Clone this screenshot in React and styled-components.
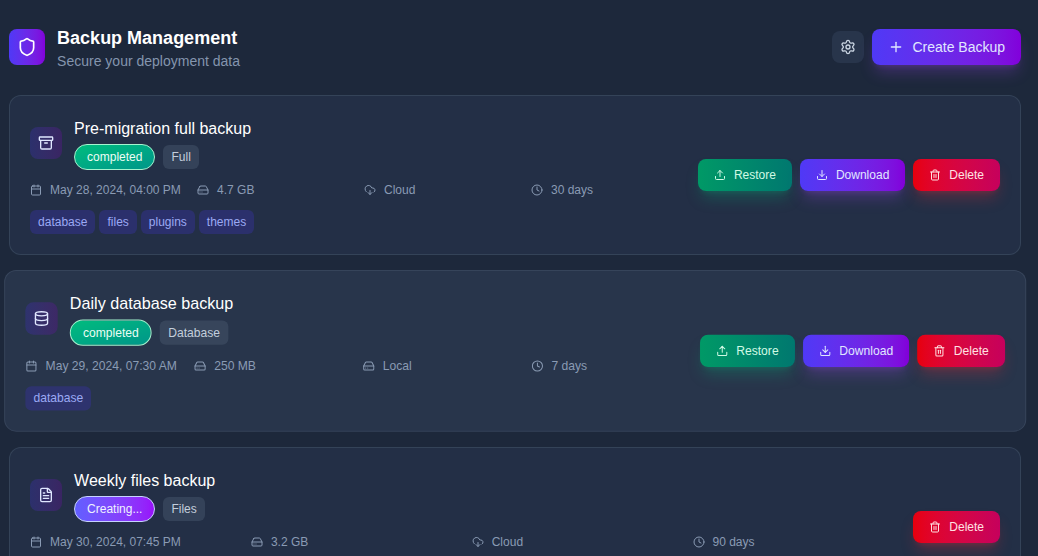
import React from 'react';
import styled, { createGlobalStyle, css } from 'styled-components';
import {
  Archive,
  Calendar,
  Clock,
  CloudDownload,
  Database,
  Download,
  FileText,
  HardDrive,
  Plus,
  Settings,
  Shield,
  Trash2,
  Upload,
} from 'lucide-react';

const GlobalStyle = createGlobalStyle`
  *, *::before, *::after { box-sizing: border-box; }
  body {
    margin: 0;
    background: #1d283b;
    font-family: "Liberation Sans", Arial, sans-serif;
    overflow: hidden;
  }
  h2, h3, p { margin: 0; }
  svg { display: block; flex-shrink: 0; }
`;

const Page = styled.main`
  height: 556px;
  overflow: hidden;
  padding: 23px 17px 0 9.1px;
`;

const Header = styled.header`
  display: flex;
  align-items: center;
  justify-content: space-between;
  margin-bottom: 24px;
`;

const Brand = styled.div`
  display: flex;
  align-items: center;
  gap: 12px;
`;

const BrandIcon = styled.div`
  padding: 8px;
  border-radius: 8px;
  color: #fff;
  background: linear-gradient(to right in oklab, #4f39f6, #8200db);
`;

const Title = styled.h2`
  padding-top: 2px;
  font-size: 18px;
  line-height: 26px;
  font-weight: 700;
  color: #fff;
`;

const Subtitle = styled.p`
  font-size: 14px;
  line-height: 20px;
  color: #8495ae;
`;

const HeaderActions = styled.div`
  display: flex;
  align-items: center;
  gap: 8px;
`;

const IconButton = styled.button`
  padding: 8px;
  border: 0;
  border-radius: 8px;
  color: #cad5e2;
  background: rgba(51, 65, 92, 0.5);
`;

const tones = {
  restore: css`
    color: #d0fae5;
    background: linear-gradient(to right in oklab, #009966, #00786f);
    box-shadow: 0 10px 15px -3px rgba(0, 188, 125, 0.25), 0 4px 6px -4px rgba(0, 188, 125, 0.25);
  `,
  primary: css`
    color: #e0e7ff;
    background: linear-gradient(to right in oklab, #4f39f6, #8200db);
    box-shadow: 0 10px 15px -3px rgba(173, 70, 255, 0.25), 0 4px 6px -4px rgba(173, 70, 255, 0.25);
  `,
  danger: css`
    color: #ffe2e2;
    background: linear-gradient(to right in oklab, #e7000b, #c6005c);
    box-shadow: 0 10px 15px -3px rgba(251, 44, 54, 0.25), 0 4px 6px -4px rgba(251, 44, 54, 0.25);
  `,
};

const Button = styled.button`
  display: flex;
  align-items: center;
  gap: 8px;
  padding: 8px 16px;
  border: 0;
  border-radius: 8px;
  font-family: inherit;
  font-size: ${({ $large }) => ($large ? '14px' : '12px')};
  line-height: ${({ $large }) => ($large ? '20px' : '16px')};
  white-space: nowrap;
  ${({ $tone }) => tones[$tone]}
`;

const List = styled.div`
  display: flex;
  flex-direction: column;
  gap: 16px;
`;

const Card = styled.article`
  display: flex;
  align-items: center;
  gap: 16px;
  padding: 20px;
  border: 1px solid rgba(69, 85, 108, 0.5);
  border-radius: 12px;
  background: ${({ $active }) => ($active ? 'rgba(51, 65, 92, 0.5)' : 'rgba(49, 65, 95, 0.3)')};
  ${({ $active }) => $active && 'transform: translate(0.2px, -0.15px) scale(1.01);'}
`;

const CardBody = styled.div`
  flex: 1;
  min-width: 0;
`;

const CardHead = styled.div`
  display: flex;
  align-items: center;
  gap: 12px;
  margin-bottom: 12px;
`;

const TypeIcon = styled.div`
  padding: 8px;
  border-radius: 8px;
  color: #e0e7ff;
  background: linear-gradient(to right in oklab, rgba(52, 49, 145, 0.5), rgba(89, 22, 139, 0.42));
`;

const CardTitle = styled.h3`
  margin-bottom: 4px;
  padding-top: 1px;
  font-size: 16px;
  line-height: 23px;
  font-weight: 400;
  color: #fff;
`;

const Badges = styled.div`
  display: flex;
  align-items: center;
  gap: 8px;
`;

const Status = styled.span`
  padding: 4px 12px;
  border-radius: 999px;
  font-size: 12px;
  line-height: 16px;
  ${({ $state }) =>
    $state === 'completed'
      ? css`
          color: #ecfdf5;
          border: 1px solid #a4f4cf;
          background: linear-gradient(to bottom right in oklab, #00bc7d, #009689);
        `
      : css`
          color: #eef2ff;
          border: 1px solid #c6d2ff;
          background: linear-gradient(to right in oklab, #615fff, #9810fa);
        `}
`;

const Chip = styled.span`
  padding: 4px 8px;
  border-radius: 6px;
  font-size: 12px;
  line-height: 16px;
  color: ${({ $accent }) => ($accent ? '#9ba9f4' : '#c3cedc')};
  background: ${({ $accent }) => ($accent ? 'rgba(52, 49, 145, 0.5)' : 'rgba(69, 85, 108, 0.5)')};
`;

const MetaGrid = styled.div`
  display: grid;
  grid-template-columns: repeat(4, minmax(0, 1fr));
  gap: 16px;
`;

const Meta = styled.div`
  display: flex;
  align-items: center;
  gap: 8px;
  font-size: 12px;
  line-height: 16px;
  white-space: nowrap;
  color: #8a9bb4;
`;

const Tags = styled.div`
  display: flex;
  gap: 4px;
  min-height: 24px;
  margin-top: 12px;
`;

const Actions = styled.div`
  display: flex;
  gap: 8px;
`;

const backups = [
  {
    name: 'Pre-migration full backup',
    icon: Archive,
    status: 'completed',
    type: 'Full',
    date: 'May 28, 2024, 04:00 PM',
    size: '4.7 GB',
    place: 'Cloud',
    keep: '30 days',
    tags: ['database', 'files', 'plugins', 'themes'],
  },
  {
    name: 'Daily database backup',
    icon: Database,
    status: 'completed',
    type: 'Database',
    date: 'May 29, 2024, 07:30 AM',
    size: '250 MB',
    place: 'Local',
    keep: '7 days',
    tags: ['database'],
    active: true,
  },
  {
    name: 'Weekly files backup',
    icon: FileText,
    status: 'Creating...',
    type: 'Files',
    date: 'May 30, 2024, 07:45 PM',
    size: '3.2 GB',
    place: 'Cloud',
    keep: '90 days',
    tags: [],
  },
];

function BackupCard({ backup }) {
  const TypeGlyph = backup.icon;
  const PlaceGlyph = backup.place === 'Cloud' ? CloudDownload : HardDrive;
  const done = backup.status === 'completed';
  return (
    <Card $active={backup.active}>
      <CardBody>
        <CardHead>
          <TypeIcon>
            <TypeGlyph size={16} />
          </TypeIcon>
          <div>
            <CardTitle>{backup.name}</CardTitle>
            <Badges>
              <Status $state={backup.status}>{backup.status}</Status>
              <Chip>{backup.type}</Chip>
            </Badges>
          </div>
        </CardHead>
        <MetaGrid>
          <Meta><Calendar size={12} />{backup.date}</Meta>
          <Meta><HardDrive size={12} />{backup.size}</Meta>
          <Meta><PlaceGlyph size={12} />{backup.place}</Meta>
          <Meta><Clock size={12} />{backup.keep}</Meta>
        </MetaGrid>
        <Tags>
          {backup.tags.map((tag) => (
            <Chip key={tag} $accent>{tag}</Chip>
          ))}
        </Tags>
      </CardBody>
      <Actions>
        {done && <Button $tone="restore"><Upload size={12} />Restore</Button>}
        {done && <Button $tone="primary"><Download size={12} />Download</Button>}
        <Button $tone="danger"><Trash2 size={12} />Delete</Button>
      </Actions>
    </Card>
  );
}

export default function App() {
  return (
    <>
      <GlobalStyle />
      <Page>
        <Header>
          <Brand>
            <BrandIcon><Shield size={20} /></BrandIcon>
            <div>
              <Title>Backup Management</Title>
              <Subtitle>Secure your deployment data</Subtitle>
            </div>
          </Brand>
          <HeaderActions>
            <IconButton aria-label="Settings"><Settings size={16} /></IconButton>
            <Button $tone="primary" $large><Plus size={16} />Create Backup</Button>
          </HeaderActions>
        </Header>
        <List>
          {backups.map((backup) => (
            <BackupCard key={backup.name} backup={backup} />
          ))}
        </List>
      </Page>
    </>
  );
}
